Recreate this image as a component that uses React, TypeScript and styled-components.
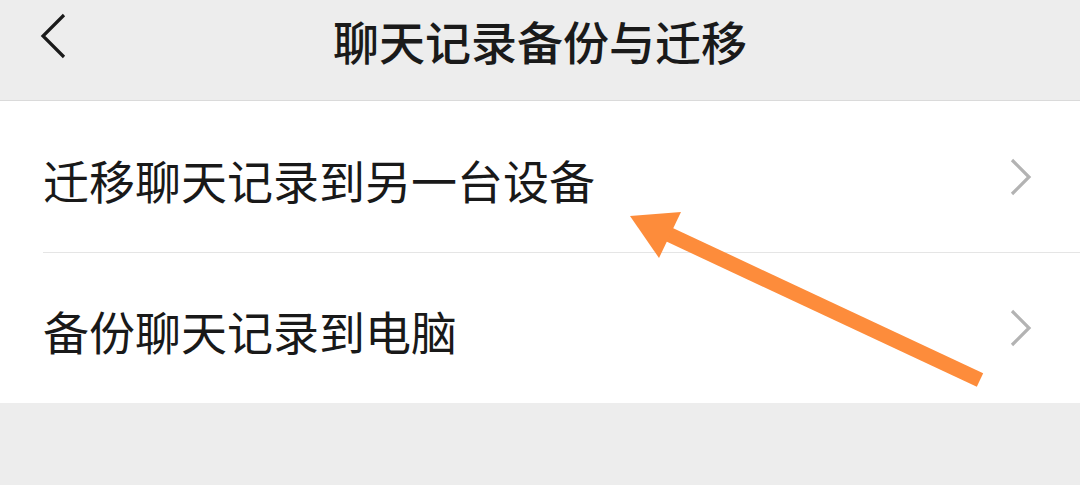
import React from 'react';
import styled, { createGlobalStyle } from 'styled-components';

const GlobalStyle = createGlobalStyle`
  html, body {
    margin: 0;
    padding: 0;
    background: #ededed;
  }
`

const Page = styled.div`
  position: relative;
  width: 1080px;
  height: 485px;
  background: #ededed;
  font-family: "Noto Sans CJK SC", "Noto Sans", sans-serif;
  overflow: hidden;
`

const Header = styled.div`
  position: relative;
  height: 100px;
  display: flex;
  align-items: center;
  justify-content: center;
  border-bottom: 1px solid #dadada;
`

const BackButton = styled.div`
  position: absolute;
  left: 38px;
  top: 12px;
  width: 30px;
  height: 48px;
`

const Title = styled.h1`
  margin: 0 0 20px;
  font-size: 46px;
  font-weight: 500;
  color: #1a1a1a;
`

const List = styled.div`
  background: #ffffff;
  display: flex;
  flex-direction: column;
`

const Row = styled.div<{ $divider?: boolean }>`
  height: ${ ({ $divider }) => $divider ? 151 : 150 }px;
  margin-left: 43px;
  padding-right: 48px;
  display: flex;
  align-items: center;
  justify-content: space-between;
  border-bottom: ${ ({ $divider }) => $divider ? '1px solid #e5e5e5' : 'none' };
`

const RowText = styled.span`
  font-size: 46px;
  color: #191919;
  margin-top: 4px;
`

const Arrow = styled.svg`
  position: absolute;
  left: 0;
  top: 0;
  pointer-events: none;
`

function Chevron () {
  return (
    <svg width="22" height="38" viewBox="0 0 22 38">
      <polyline points="2,2 19,19 2,36" fill="none" stroke="#b3b3b3" strokeWidth="3.2" />
    </svg>
  )
}

export default function App () {
  return (
    <Page>
      <GlobalStyle />
      <Header>
        <BackButton>
          <svg width="30" height="48" viewBox="0 0 30 48">
            <polyline points="26,3 5,24 26,45" fill="none" stroke="#1a1a1a" strokeWidth="3.2" />
          </svg>
        </BackButton>
        <Title>聊天记录备份与迁移</Title>
      </Header>
      <List>
        <Row $divider>
          <RowText>迁移聊天记录到另一台设备</RowText>
          <Chevron />
        </Row>
        <Row>
          <RowText>备份聊天记录到电脑</RowText>
          <Chevron />
        </Row>
      </List>
      <Arrow width="1080" height="485" viewBox="0 0 1080 485">
        <line x1="668" y1="234" x2="980" y2="380" stroke="#fd8c3b" strokeWidth="15" />
        <polygon points="630,216 681,212 659,258" fill="#fd8c3b" />
      </Arrow>
    </Page>
  )
}
